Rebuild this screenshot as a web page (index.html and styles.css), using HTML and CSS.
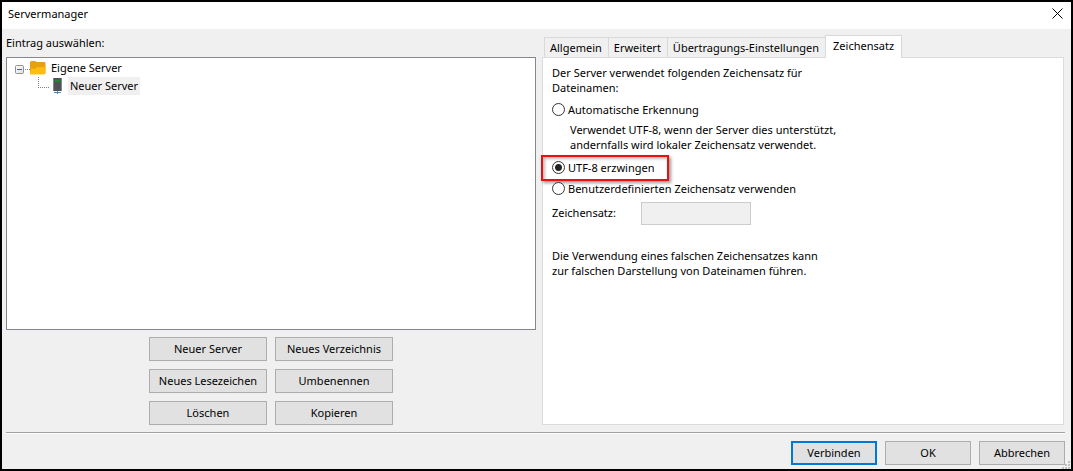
FILE: index.html
```html
<!DOCTYPE html>
<html lang="de">
<head>
<meta charset="utf-8">
<title>Servermanager</title>
<link rel="stylesheet" href="styles.css">
</head>
<body>
<div class="window">
  <header class="titlebar">
    <h1 class="title">Servermanager</h1>
    <button class="close" type="button" aria-label="Schließen">
      <svg width="11" height="11" viewBox="0 0 11 11"><path d="M.5 .5l10 10M10.500 .5l-10 10" stroke="#000" stroke-width="1" fill="none"/></svg>
    </button>
  </header>
  <main class="content">
    <section class="entries">
      <h2 class="entries-label" id="entries-label">Eintrag auswählen:</h2>
      <ul class="tree" role="tree" aria-labelledby="entries-label">
        <li class="node" role="treeitem" aria-expanded="true">
          <svg class="node-art" width="42" height="18" viewBox="0 0 42 18">
            <defs>
              <linearGradient id="box" x1="0" y1="0" x2="1" y2="1"><stop offset="0" stop-color="#fff"/><stop offset="1" stop-color="#dcdcdc"/></linearGradient>
              <linearGradient id="front" x1="0" y1="0" x2="0" y2="1"><stop offset="0" stop-color="#fdb813"/><stop offset="1" stop-color="#ffc20e"/></linearGradient>
            </defs>
            <rect x="8.500" y="6.500" width="8" height="8" rx="1" fill="url(#box)" stroke="#919191"/>
            <path d="M10 10.500h5" stroke="#4b63a7"/>
            <path d="M18 10.500h6" stroke="#808080" stroke-dasharray="1 1"/>
            <path d="M23 15V3.500q0-1.500 1.500-1.500h3.500q.8 0 1.500 1h8q1 0 1 1v11z" fill="#e6a110"/>
            <path d="M23.500 15.500q-.7 0-.5-1l.8-4q.2-1 1.200-1h3.500l1.500-1.500h8q.8 0 .7.900l-.7 5.400q-.2 1.200-1.500 1.200z" fill="url(#front)"/>
          </svg>
          <span class="node-name">Eigene Server</span>
        </li>
        <li class="node" role="treeitem" aria-selected="true">
          <svg class="node-art" width="61" height="18" viewBox="0 0 61 18">
            <path d="M31.500 0v10.500" stroke="#808080" stroke-dasharray="1 1" fill="none"/>
            <path d="M31 10.500h12" stroke="#808080" stroke-dasharray="1 1"/>
            <rect x="46" y="1" width="9" height="13" rx="1" fill="#505356"/>
            <path d="M46.500 2v11M54.500 2v11" stroke="#85898c"/>
            <rect x="48" y="3" width="5" height="2" fill="#1c8a30"/>
            <path d="M50.500 14v3M47 15.500h7" stroke="#4e86b4"/>
          </svg>
          <span class="node-name selected">Neuer Server</span>
        </li>
      </ul>
      <div class="entry-actions">
        <button class="btn" type="button">Neuer Server</button>
        <button class="btn" type="button">Neues Verzeichnis</button>
        <button class="btn" type="button">Neues Lesezeichen</button>
        <button class="btn" type="button">Umbenennen</button>
        <button class="btn" type="button">Löschen</button>
        <button class="btn" type="button">Kopieren</button>
      </div>
    </section>
    <section class="settings">
      <div class="tabs" role="tablist">
        <button class="tab" type="button" role="tab">Allgemein</button>
        <button class="tab" type="button" role="tab">Erweitert</button>
        <button class="tab" type="button" role="tab">Übertragungs-Einstellungen</button>
        <button class="tab active" type="button" role="tab" aria-selected="true">Zeichensatz</button>
      </div>
      <form class="panel" role="tabpanel">
        <p class="text">Der Server verwendet folgenden Zeichensatz für<br>Dateinamen:</p>
        <label class="option first"><input class="radio" type="radio" name="charset">Automatische Erkennung</label>
        <p class="text hint">Verwendet UTF-8, wenn der Server dies unterstützt,<br>andernfalls wird lokaler Zeichensatz verwendet.</p>
        <label class="option forced"><input class="radio" type="radio" name="charset" checked>UTF-8 erzwingen<span class="marker"></span></label>
        <label class="option"><input class="radio" type="radio" name="charset">Benutzerdefinierten Zeichensatz verwenden</label>
        <div class="field">
          <label class="field-label" for="encoding">Zeichensatz:</label>
          <input class="field-input" id="encoding" type="text" disabled>
        </div>
        <p class="text">Die Verwendung eines falschen Zeichensatzes kann<br>zur falschen Darstellung von Dateinamen führen.</p>
      </form>
    </section>
  </main>
  <footer class="footer">
    <button class="btn primary" type="button">Verbinden</button>
    <button class="btn" type="button">OK</button>
    <button class="btn" type="button">Abbrechen</button>
    <svg class="grip" width="8" height="8" viewBox="0 0 8 8" fill="#bfbfbf"><path d="M6 0h2v2H6zM3 3h2v2H3zM6 3h2v2H6zM0 6h2v2H0zM3 6h2v2H3zM6 6h2v2H6z"/></svg>
  </footer>
</div>
</body>
</html>
```

FILE: styles.css
```css
* {
  box-sizing: border-box;
}

body {
  margin: 0;
  color: #000;
  font: 11px/15px "Noto Sans", "Open Sans", sans-serif;
}

h1, h2, p, ul {
  margin: 0;
  padding: 0;
  font-size: 11px;
  font-weight: 400;
}

button, input {
  font: inherit;
  color: inherit;
}

.window {
  display: flex;
  flex-direction: column;
  min-height: 100vh;
  border: 2px solid #000;
  background: #f0f0f0;
}

.titlebar {
  display: flex;
  align-items: center;
  justify-content: space-between;
  height: 27px;
  padding: 0 8px 4px 6px;
  background: #fff;
}

.close {
  display: flex;
  padding: 0;
  border: 0;
  background: none;
}

.content {
  display: grid;
  grid-template-columns: 530fr 522fr;
  gap: 6px;
  flex: 1;
  margin: 0 7px 0 4px;
  padding: 6px 0 7px;
}

.entries {
  display: flex;
  flex-direction: column;
}

.entries-label {
  padding-bottom: 7px;
}

.tree {
  flex: 1;
  padding-top: 1px;
  border: 1px solid #828790;
  background: #fff;
  list-style: none;
}

.node {
  display: flex;
  height: 18px;
}

.node-art {
  flex: none;
}

.node-name {
  padding: 0 2px;
  line-height: 18px;
}

.selected {
  background: #f0f0f0;
}

.entry-actions {
  display: grid;
  grid-template-columns: 118px 118px;
  justify-content: center;
  gap: 8px;
  padding-top: 7px;
}

.btn {
  height: 24px;
  padding: 0 0 1px;
  border: 1px solid #adadad;
  background: #e1e1e1;
}

.settings {
  display: flex;
  flex-direction: column;
}

.tabs {
  display: flex;
  align-items: flex-end;
  margin-bottom: -1px;
  padding-left: 2px;
}

.tab {
  height: 21px;
  padding: 0 6px 0 5px;
  border: 1px solid #d9d9d9;
  border-right: 0;
  background: #f0f0f0;
}

.tab.active {
  z-index: 1;
  height: 23px;
  padding: 0 7px 3px;
  border-right: 1px solid #d9d9d9;
  border-bottom: 0;
  background: #fff;
}

.panel {
  flex: 1;
  padding: 7px 9px;
  border: 1px solid #dcdcdc;
  background: #fff;
}

.option {
  position: relative;
  display: flex;
  align-items: center;
  gap: 3px;
  width: max-content;
  margin-top: 6px;
}

.first {
  margin-top: 7px;
}

.forced {
  margin-top: 8px;
}

.radio {
  appearance: none;
  width: 13px;
  height: 13px;
  margin: 0;
  border: 1px solid #333;
  border-radius: 50%;
  background: #fff;
}

.radio:checked {
  background: radial-gradient(circle, #222 3px, #fff 4px);
}

.hint {
  margin-top: 5px;
  padding-left: 18px;
}

.marker {
  position: absolute;
  inset: -5px -14px -6px -11px;
  border: 2px solid #f00d0d;
  box-shadow: 2px 2px 3px #0006, inset 2px 2px 3px #0004;
}

.field {
  display: grid;
  grid-template-columns: 89px 110px;
  align-items: center;
  margin: 6px 0 23px;
}

.field-label {
  padding-bottom: 2px;
}

.field-input {
  width: 100%;
  height: 23px;
  border: 1px solid #ccc;
  background: #f0f0f0;
}

.footer {
  position: relative;
  display: flex;
  justify-content: flex-end;
  gap: 8px;
  margin: 0 6px 0 4px;
  padding: 8px 0 4px;
  border-top: 1px solid #a0a0a0;
  box-shadow: inset 0 1px #fff;
}

.footer .btn {
  width: 86px;
}

.footer .primary {
  border: 2px solid #0078d7;
}

.grip {
  position: absolute;
  right: -5px;
  bottom: 0;
}
```
